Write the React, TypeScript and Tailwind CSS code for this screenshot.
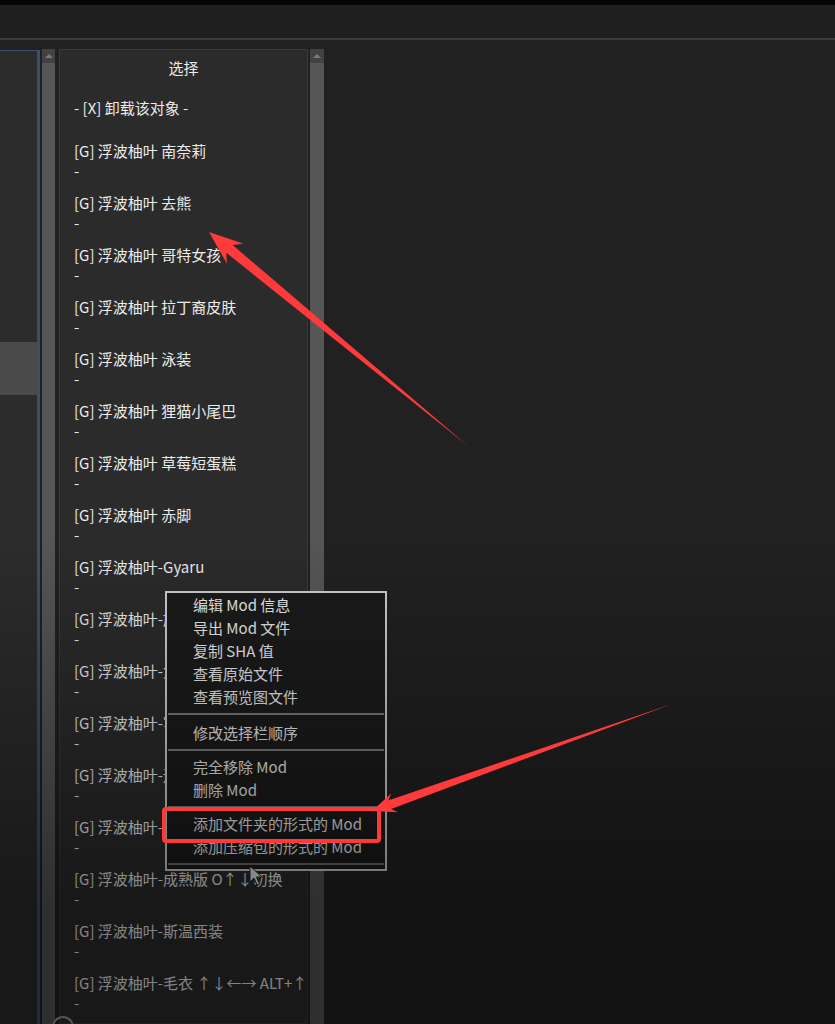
import React from 'react';

const FONT = "font-['Noto_Sans_CJK_SC','Noto_Sans',sans-serif]";

const items: string[] = [
  '[G] 浮波柚叶 南奈莉',
  '[G] 浮波柚叶 去熊',
  '[G] 浮波柚叶 哥特女孩',
  '[G] 浮波柚叶 拉丁裔皮肤',
  '[G] 浮波柚叶 泳装',
  '[G] 浮波柚叶 狸猫小尾巴',
  '[G] 浮波柚叶 草莓短蛋糕',
  '[G] 浮波柚叶 赤脚',
  '[G] 浮波柚叶-Gyaru',
  '[G] 浮波柚叶-旗袍',
  '[G] 浮波柚叶-女仆',
  '[G] 浮波柚叶-写真',
  '[G] 浮波柚叶-运动服',
  '[G] 浮波柚叶-校服',
  '[G] 浮波柚叶-成熟版 O↑↓切换',
  '[G] 浮波柚叶-斯温西装',
  '[G] 浮波柚叶-毛衣 ↑↓←→ ALT+↑↓切',
];

type MenuRow = { label: string } | { sep: 'a' | 'b' };

const menuRows: MenuRow[] = [
  { label: '编辑 Mod 信息' },
  { label: '导出 Mod 文件' },
  { label: '复制 SHA 值' },
  { label: '查看原始文件' },
  { label: '查看预览图文件' },
  { sep: 'a' },
  { label: '修改选择栏顺序' },
  { sep: 'b' },
  { label: '完全移除 Mod' },
  { label: '删除 Mod' },
  { sep: 'b' },
  { label: '添加文件夹的形式的 Mod' },
  { label: '添加压缩包的形式的 Mod' },
];

// tapered "screenshot tool" arrow, tip -> tail
function arrowPoints(
  tip: [number, number],
  tail: [number, number],
  headLen: number,
  headHalf: number,
  neckHalf: number
) {
  const dx = tail[0] - tip[0];
  const dy = tail[1] - tip[1];
  const len = Math.hypot(dx, dy);
  const ux = dx / len;
  const uy = dy / len;
  const nx = -uy;
  const ny = ux;
  const p = (a: number, b: number) => `${tip[0] + ux * a + nx * b},${tip[1] + uy * a + ny * b}`;
  return [
    `${tip[0]},${tip[1]}`,
    p(headLen, headHalf),
    p(headLen * 0.78, neckHalf),
    `${tail[0]},${tail[1]}`,
    p(headLen * 0.78, -neckHalf),
    p(headLen, -headHalf),
  ].join(' ');
}

const ScrollBar: React.FC<{ className?: string }> = ({ className }) => (
  <div className={`flex flex-col bg-[#565656] ${className ?? ''}`}>
    <div className="h-[14px] bg-[#424242] flex items-center justify-center">
      <div className="w-0 h-0 border-l-[4px] border-r-[4px] border-b-[4px] border-l-transparent border-r-transparent border-b-[#7a7a7a]" />
    </div>
  </div>
);

export default function App() {
  return (
    <div className={`relative w-[835px] h-[1024px] overflow-hidden bg-[#212121] ${FONT}`}>
      {/* title strip */}
      <div className="h-[5px] bg-[#050505]" />
      <div className="h-[33px] bg-[#1f1f1f]" />
      <div className="h-[2px] bg-[#3a3a3a]" />
      <div className="h-[9px]" />

      <div className="flex items-start h-[975px]">
        {/* left list, cut off */}
        <div className="mt-px w-[40px] h-full bg-[#2c2c2c] border-t border-r-[3px] border-[#3b506c] flex flex-col">
          <div className="h-[291px]" />
          <div className="h-[53px] bg-[#4a4a4a]" />
        </div>
        <ScrollBar className="ml-[2px] w-[13px] h-full" />

        {/* select panel */}
        <div className="ml-[4px] w-[249px] h-full bg-[#2b2b2b] border border-[#3a3a3a] text-[15px] text-[#ececec] leading-[20px]">
          <div className="pt-[8px] text-center">选择</div>
          <div className="mt-[20px] pl-[14px]">- [X] 卸载该对象 -</div>
          <div className="mt-[23px] pl-[14px] flex flex-col">
            {items.map((it, i) => (
              <div key={i} className="h-[52px] whitespace-nowrap overflow-hidden">
                <div>{it}</div>
                <div>-</div>
              </div>
            ))}
          </div>
        </div>
        <ScrollBar className="ml-[2px] w-[14px] h-full" />
      </div>

      {/* context menu */}
      <div className="absolute left-[165px] top-[591px] w-[222px] h-[280px] border-2 border-[#cfcfcf] bg-[#1b1b1b] text-[15px] text-[#ececec] flex flex-col">
        {menuRows.map((r, i) =>
          'sep' in r ? (
            <div
              key={i}
              className={`${r.sep === 'a' ? 'mt-[5px] mb-[6px]' : 'mt-[5px] mb-[4px]'} mx-px h-[2px] bg-[#7c7c7c]`}
            />
          ) : (
            <div key={i} className="pl-[26px] leading-[23px] whitespace-nowrap">
              {r.label}
            </div>
          )
        )}
        <div className="mt-auto mb-[4px] mx-px h-[2px] bg-[#6a6a6a]" />
      </div>

      {/* mouse pointer */}
      <svg className="absolute left-[249px] top-[865px]" width="14" height="22" viewBox="0 0 14 22">
        <path d="M1 1 L1 17 L5 13 L8 20 L10.5 19 L7.5 12 L13 12 Z" fill="#e8e8e8" stroke="#222" strokeWidth="1" />
      </svg>

      {/* little circle at the bottom */}
      <div className="absolute left-[52px] top-[1016px] w-[22px] h-[22px] rounded-full border-2 border-[#9a9a9a]" />

      {/* video vignette */}
      <div className="pointer-events-none absolute inset-0 bg-linear-to-b from-transparent from-[52%] to-black/45 to-[88%]" />

      {/* red highlight box */}
      <div className="absolute left-[162px] top-[807px] w-[219px] h-[36px] border-[4px] border-[#ff3838] rounded-[4px]" />

      {/* arrows */}
      <svg className="pointer-events-none absolute left-0 top-0" width="835" height="1024" viewBox="0 0 835 1024">
        <polygon points={arrowPoints([209, 232], [468, 446], 34, 13, 5)} fill="#ff3a3a" />
        <polygon points={arrowPoints([372, 811], [672, 704], 24, 10, 4.5)} fill="#ff3a3a" />
      </svg>
    </div>
  );
}
